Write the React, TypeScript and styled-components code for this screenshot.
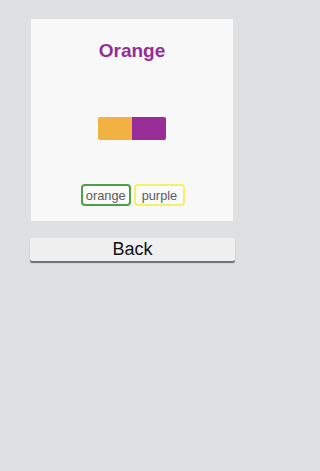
import React from "react";
import styled, { createGlobalStyle } from "styled-components";

const GlobalStyle = createGlobalStyle`
  html, body {
    margin: 0;
    padding: 0;
    background: #dfe0e1;
    font-family: "Liberation Sans", Arial, sans-serif;
  }
`;

const Page = styled.div`
  display: flex;
  flex-direction: column;
  align-items: flex-start;
  padding: 19px 0 0 30px;
  min-height: 471px;
  box-sizing: border-box;
`;

const Card = styled.div`
  width: 202px;
  height: 202px;
  box-sizing: border-box;
  background: #f8f8f8;
  display: flex;
  flex-direction: column;
  align-items: center;
  padding-top: 21px;
  margin-left: 1px;
`;

const Title = styled.h1`
  margin: 0;
  font-size: 19px;
  line-height: 22px;
  font-weight: 700;
  color: #952d97;
`;

const Swatch = styled.div`
  display: flex;
  margin-top: 55px;
  width: 68px;
  height: 23px;
  border-radius: 2px;
  overflow: hidden;
`;

const SwatchHalf = styled.div<{ $color: string }>`
  flex: 1;
  background: ${(p) => p.$color};
`;

const Chips = styled.div`
  display: flex;
  gap: 3px;
  margin-top: 44px;
  margin-left: 2px;
`;

const Chip = styled.span<{ $border: string; $pad: number }>`
  display: inline-flex;
  align-items: center;
  justify-content: center;
  height: 22px;
  box-sizing: border-box;
  padding: 0 ${(p) => p.$pad}px;
  border: 2px solid ${(p) => p.$border};
  border-radius: 4px;
  font-size: 12.8px;
  color: #5a5a5a;
  background: #fafafa;
`;

const BackButton = styled.button`
  margin-top: 17px;
  width: 205px;
  height: 23px;
  padding: 0;
  border: none;
  border-radius: 2px;
  background: #efefef;
  box-shadow: 0 2px 1px #6f6f6f;
  font-family: "Liberation Sans", Arial, sans-serif;
  font-size: 18px;
  line-height: 23px;
  color: #111;
`;

const App = () => {
  return (
    <Page>
      <GlobalStyle />
      <Card>
        <Title>Orange</Title>
        <Swatch>
          <SwatchHalf $color="#f1b143" />
          <SwatchHalf $color="#992d98" />
        </Swatch>
        <Chips>
          <Chip $border="#4e9e4c" $pad={3}>orange</Chip>
          <Chip $border="#f3f06a" $pad={6}>purple</Chip>
        </Chips>
      </Card>
      <BackButton>Back</BackButton>
    </Page>
  );
};

export default App;
